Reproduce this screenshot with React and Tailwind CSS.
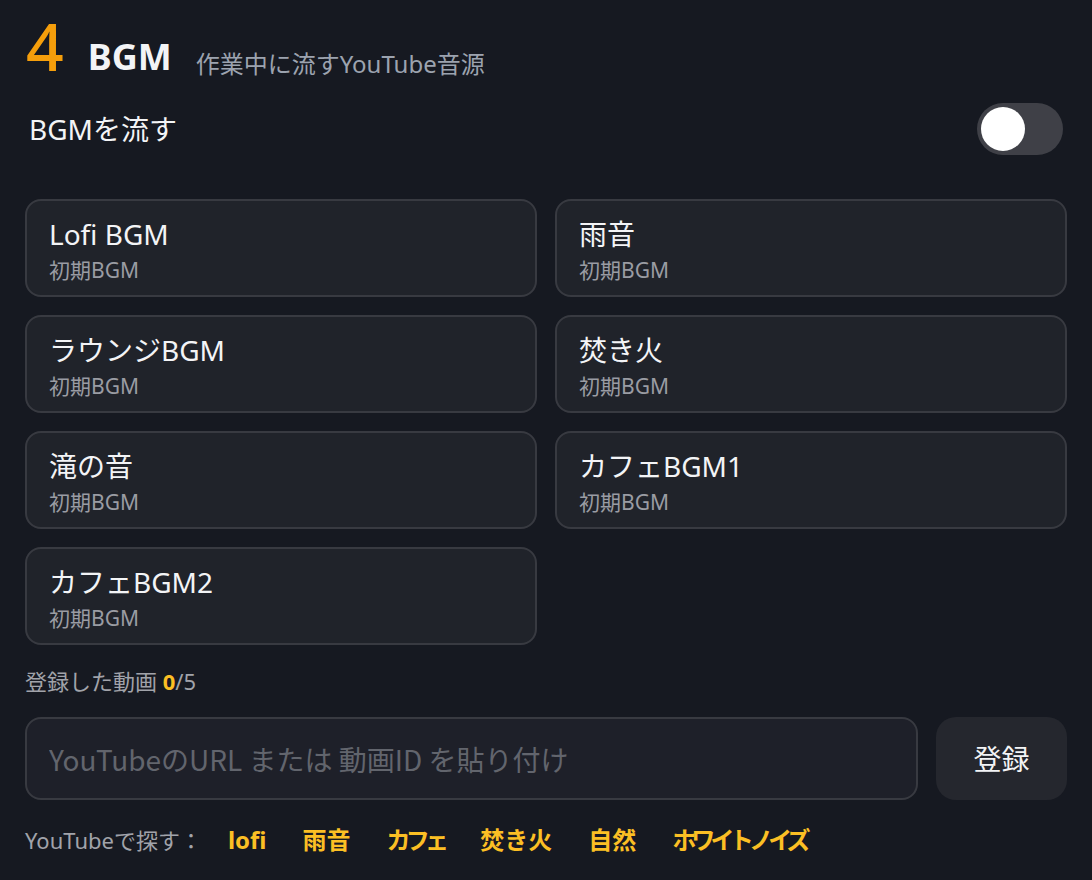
import React, { useState } from 'react';

const presets = [
  { title: 'Lofi BGM', note: '初期BGM' },
  { title: '雨音', note: '初期BGM' },
  { title: 'ラウンジBGM', note: '初期BGM' },
  { title: '焚き火', note: '初期BGM' },
  { title: '滝の音', note: '初期BGM' },
  { title: 'カフェBGM1', note: '初期BGM' },
  { title: 'カフェBGM2', note: '初期BGM' },
];

// kana-only words get tighter tracking, like the proportional kana of the original font
const searchTags = [
  { label: 'lofi', tight: false },
  { label: '雨音', tight: false },
  { label: 'カフェ', tight: true },
  { label: '焚き火', tight: false },
  { label: '自然', tight: false },
  { label: 'ホワイトノイズ', tight: true },
];

export default function App() {
  const [enabled, setEnabled] = useState(false);

  return (
    <div
      className="min-h-[880px] bg-[#161921] text-white px-[25px] pt-[18px]"
      style={{ fontFamily: '"Noto Sans", "Noto Sans CJK JP", sans-serif' }}
    >
      {/* Section header */}
      <div className="flex items-end gap-[24px] h-[60px]">
        <span className="text-[66px] leading-none font-medium text-[#f59e0b] pl-[1px]">4</span>
        <span className="text-[36px] leading-none font-bold text-[#f3f4f6] pb-[3px]">BGM</span>
        <span className="text-[24px] leading-none text-[#9ca3af] pb-[2px]">作業中に流すYouTube音源</span>
      </div>

      {/* Toggle row */}
      <div className="flex items-center justify-between mt-[25px] pl-[4px] pr-[4px]">
        <span className="text-[28px] text-[#f3f4f6]">BGMを流す</span>
        <button
          type="button"
          onClick={() => setEnabled(!enabled)}
          className={`w-[86px] h-[52px] rounded-full p-[4px] flex items-center ${enabled ? 'bg-[#f59e0b] justify-end' : 'bg-[#3f4047] justify-start'}`}
        >
          <span className="block w-[44px] h-[44px] rounded-full bg-white" />
        </button>
      </div>

      {/* Preset grid */}
      <div className="grid grid-cols-2 gap-[18px] mt-[44px]">
        {presets.map((p) => (
          <div
            key={p.title}
            className="h-[98px] rounded-[16px] border-2 border-[#383a41] bg-[#20232a] px-[22px] pt-[14px]"
          >
            <div className="text-[28px] leading-[38px] text-[#f3f4f6]">{p.title}</div>
            <div className="text-[21px] leading-[34px] text-[#9a9ca3]">{p.note}</div>
          </div>
        ))}
      </div>

      {/* Registered count */}
      <div className="mt-[20px] text-[22px] leading-[32px] text-[#a1a3aa]">
        登録した動画 <span className="font-bold text-[#fbbf24]">0</span>/5
      </div>

      {/* URL input */}
      <div className="flex gap-[18px] mt-[20px]">
        <input
          type="text"
          placeholder="YouTubeのURL または 動画ID を貼り付け"
          className="flex-1 h-[83px] rounded-[16px] border-2 border-[#383a41] bg-[#1e2029] px-[22px] text-[28px] font-['Noto_Sans_CJK_JP'] text-white placeholder:text-[#62656d] outline-none"
        />
        <button
          type="button"
          className="w-[131px] h-[83px] rounded-[20px] bg-[#25272e] text-[28px] text-[#f3f4f6]"
        >
          登録
        </button>
      </div>

      {/* Search links */}
      <div className="flex items-center mt-[24px] text-[22px] leading-[32px]">
        <span className="text-[#a1a3aa] mr-[26px]">YouTubeで探す：</span>
        <div className="flex gap-[36px]">
          {searchTags.map((t) => (
            <a
              key={t.label}
              href="#"
              className={`text-[24px] font-bold text-[#fbbf24] ${t.tight ? 'tracking-[-0.2em]' : ''}`}
            >
              {t.label}
            </a>
          ))}
        </div>
      </div>
    </div>
  );
}
